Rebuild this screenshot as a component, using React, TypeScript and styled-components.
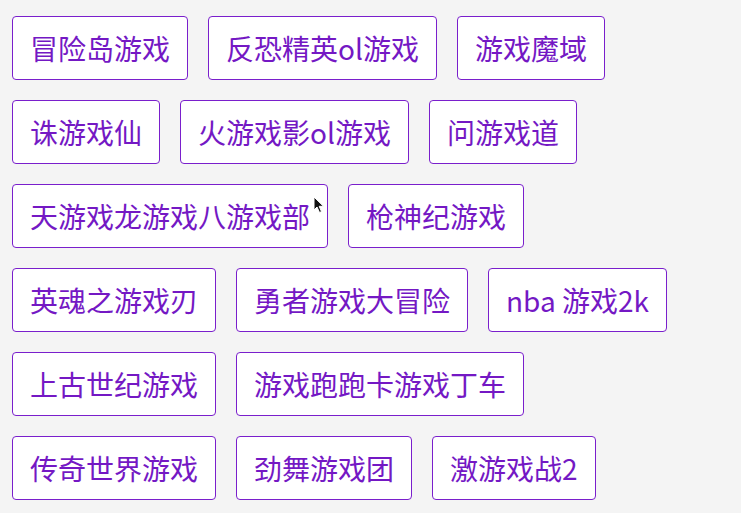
import styled, { createGlobalStyle } from 'styled-components'

const tags = [
  '冒险岛游戏',
  '反恐精英ol游戏',
  '游戏魔域',
  '诛游戏仙',
  '火游戏影ol游戏',
  '问游戏道',
  '天游戏龙游戏八游戏部',
  '枪神纪游戏',
  '英魂之游戏刃',
  '勇者游戏大冒险',
  'nba 游戏2k',
  '上古世纪游戏',
  '游戏跑跑卡游戏丁车',
  '传奇世界游戏',
  '劲舞游戏团',
  '激游戏战2',
]

function App() {
  return (
    <>
      <GlobalStyle />
      <TagList>
        {tags.map((t, i) => (
          <Tag key={t}>
            {t}
            {i === 6 && (
              <Cursor viewBox="0 0 12 18" width="12" height="18">
                <path
                  d="M1 1 L1 14 L4 11 L6.5 16.5 L8.5 15.6 L6.2 10.3 L10.5 10.3 Z"
                  fill="#111"
                  stroke="#fff"
                  strokeWidth="1"
                />
              </Cursor>
            )}
          </Tag>
        ))}
      </TagList>
    </>
  )
}

export default App

const GlobalStyle = createGlobalStyle`
  html, body {
    margin: 0;
    background: #f4f4f4;
  }
  body {
    font-family: "Noto Sans CJK SC", "Noto Sans", sans-serif;
  }
`

const TagList = styled.div`
  display: flex;
  flex-wrap: wrap;
  align-items: flex-start;
  gap: 20px;
  padding: 16px 12px;
`

const Tag = styled.div`
  position: relative;
  box-sizing: border-box;
  height: 64px;
  display: flex;
  align-items: center;
  padding: 0 17px;
  background: #fff;
  border: 1px solid #7a1fcc;
  border-radius: 4px;
  color: #7418c4;
  font-size: 28px;
  white-space: nowrap;
`

const Cursor = styled.svg`
  position: absolute;
  left: 300px;
  top: 11px;
`
